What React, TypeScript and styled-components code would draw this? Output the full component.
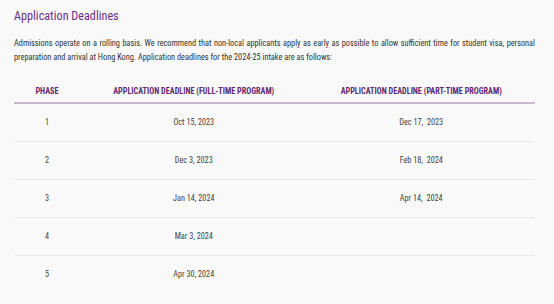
import { FC } from 'react';
import styled, { createGlobalStyle } from 'styled-components';

const GlobalStyle = createGlobalStyle`
  html, body {
    margin: 0;
    padding: 0;
    background: #f9f9f9;
  }
  body {
    font-family: Roboto, 'Noto Sans', sans-serif;
    font-stretch: condensed;
  }
`;

interface Deadline {
  phase: number;
  fullTime: string;
  partTime: string;
}

const deadlines: Deadline[] = [
  { phase: 1, fullTime: 'Oct 15, 2023', partTime: 'Dec 17,  2023' },
  { phase: 2, fullTime: 'Dec 3, 2023', partTime: 'Feb 18,  2024' },
  { phase: 3, fullTime: 'Jan 14, 2024', partTime: 'Apr 14,  2024' },
  { phase: 4, fullTime: 'Mar 3, 2024', partTime: '' },
  { phase: 5, fullTime: 'Apr 30, 2024', partTime: '' },
];

const App: FC = () => {
  return (
    <>
      <GlobalStyle />
      <Section>
        <Title>Application Deadlines</Title>
        <Intro>
          Admissions operate on a rolling basis. We recommend that non-local applicants apply as early as possible to allow sufficient time for student visa, personal preparation and arrival at Hong Kong. Application deadlines for the 2024-25 intake are as follows:
        </Intro>
        <Table>
          <thead>
            <tr>
              <HeadCell $width={66}>PHASE</HeadCell>
              <HeadCell>APPLICATION DEADLINE (FULL-TIME PROGRAM)</HeadCell>
              <HeadCell>APPLICATION DEADLINE (PART-TIME PROGRAM)</HeadCell>
            </tr>
          </thead>
          <tbody>
            {deadlines.map((d) => (
              <Row key={d.phase}>
                <Cell>{d.phase}</Cell>
                <Cell>{d.fullTime}</Cell>
                <Cell>{d.partTime}</Cell>
              </Row>
            ))}
          </tbody>
        </Table>
      </Section>
    </>
  );
};

export default App;

const Section = styled.section`
  padding: 6px 19px 0 14px;
`;

const Title = styled.h2`
  margin: 0;
  font-size: 12.2px;
  font-weight: 400;
  line-height: 20px;
  color: #6b2f80;
`;

const Intro = styled.p`
  margin: 11px 0 0;
  font-size: 8.3px;
  line-height: 13.5px;
  color: #333;
  text-align: justify;
`;

const Table = styled.table`
  width: 100%;
  margin-top: 20px;
  border-collapse: collapse;
  table-layout: fixed;
`;

const HeadCell = styled.th<{ $width?: number }>`
  ${(p) => (p.$width ? `width: ${p.$width}px;` : '')}
  padding: 0 0 4px;
  font-size: 8.2px;
  font-weight: 700;
  line-height: 14px;
  text-align: center;
  color: #5d2a73;
  border-bottom: 2px solid #c8b9cf;
`;

const Row = styled.tr`
  height: 38px;
  &:not(:last-child) td {
    border-bottom: 1px solid #e8e8e8;
  }
`;

const Cell = styled.td`
  padding: 0;
  font-size: 8.2px;
  text-align: center;
  color: #444;
  white-space: pre;
`;
